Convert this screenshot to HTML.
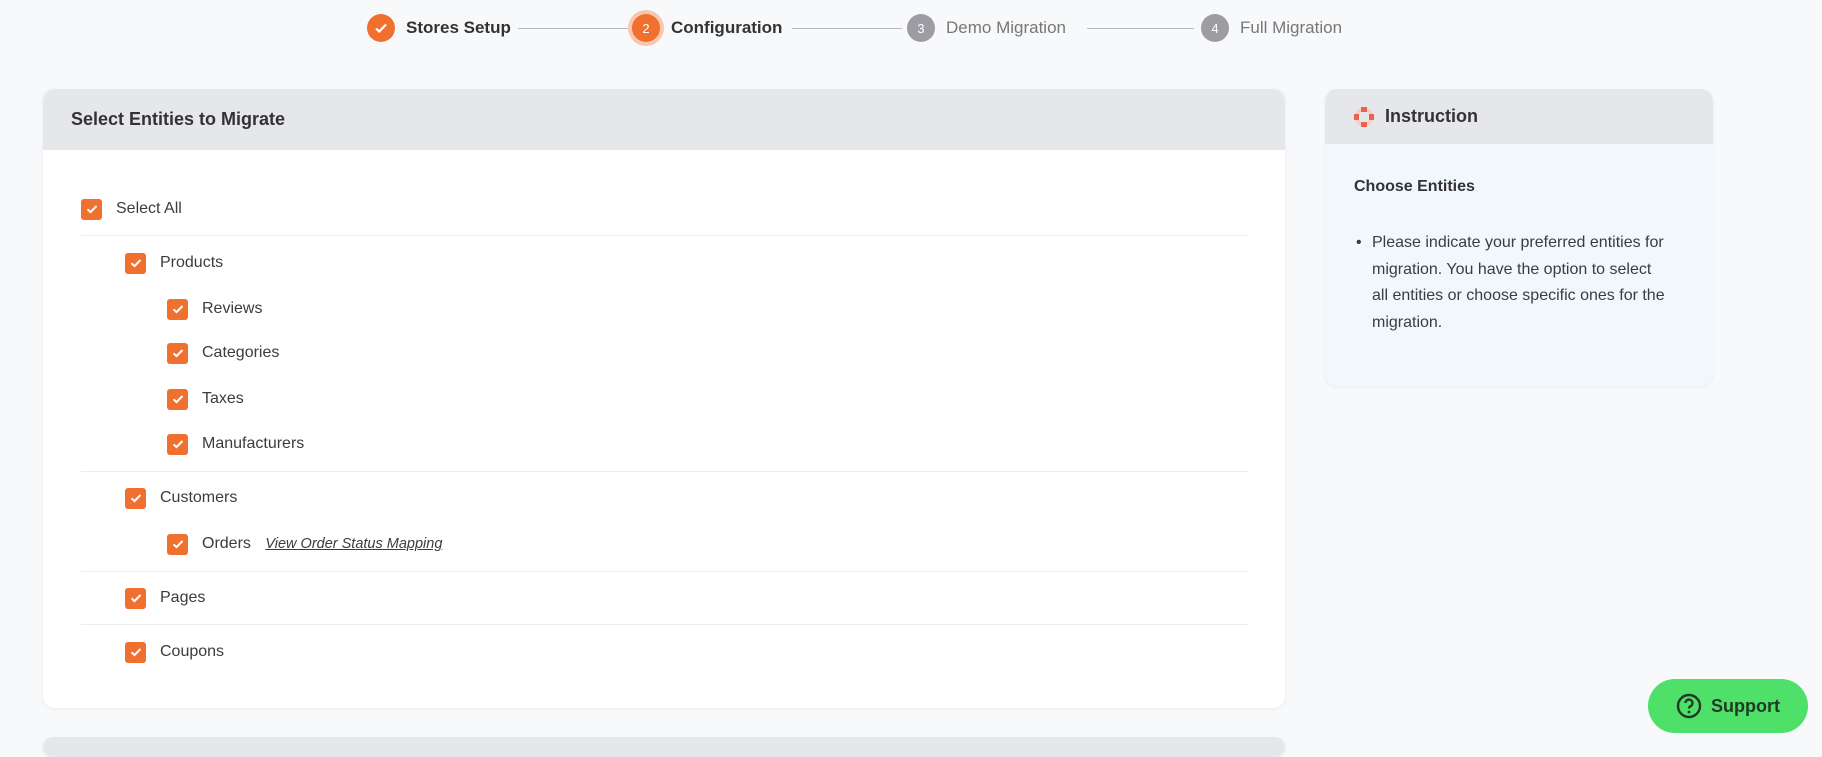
<!DOCTYPE html>
<html><head><meta charset="utf-8"><style>
*{box-sizing:border-box;margin:0;padding:0}
body{width:1822px;height:745px;overflow:hidden;background:#f8f9fb;font-family:"Liberation Sans",sans-serif;color:#3a3a3a;position:relative}
.step{position:absolute;top:14px;height:28px;display:flex;align-items:center;font-size:17px}
.c{width:28px;height:28px;border-radius:50%;display:flex;align-items:center;justify-content:center;color:#fff;font-size:13px;margin-right:11px}
.line{position:absolute;top:28px;height:1px;background:#b8b8be}
.card{position:absolute;background:#fff;border-radius:12px;box-shadow:0 1px 4px rgba(0,0,0,.06);overflow:hidden}
.hd{background:#e6e7ea;font-weight:bold;font-size:18px;color:#333;display:flex;align-items:center}
.row{position:absolute;display:flex;align-items:center;font-size:16px;color:#3c3c3c;height:22px}
.cb{width:21px;height:21px;background:#f07030;border-radius:3px;margin-right:14px;display:flex;align-items:center;justify-content:center}
.div{position:absolute;left:81px;width:1167px;height:1px;background:#ececec}
</style></head><body>
<div class="step" style="left:367px"><div class="c" style="background:#f07030"><svg width="16" height="16" viewBox="0 0 16 16"><path d="M3 8.5l3.2 3L13 4.5" stroke="#fff" stroke-width="2.2" fill="none"/></svg></div><b style="color:#333">Stores Setup</b></div>
<div class="line" style="left:518px;width:110px"></div>
<div class="step" style="left:632px"><div class="c" style="background:#f07030;box-shadow:0 0 0 4px #f9c7ad">2</div><b style="color:#333;font-weight:600">Configuration</b></div>
<div class="line" style="left:792px;width:110px"></div>
<div class="step" style="left:907px;color:#777"><div class="c" style="background:#9c9ca2">3</div>Demo Migration</div>
<div class="line" style="left:1087px;width:107px"></div>
<div class="step" style="left:1201px;color:#777"><div class="c" style="background:#9c9ca2">4</div>Full Migration</div>

<div class="card" style="left:43px;top:89px;width:1242px;height:619px">
<div class="hd" style="height:61px;padding-left:28px">Select Entities to Migrate</div>
</div>
<div class="div" style="top:235px"></div><div class="div" style="top:471px"></div><div class="div" style="top:571px"></div><div class="div" style="top:624px"></div>
<div id="rows"></div>

<div class="card" style="left:1325px;top:89px;width:388px;height:297px;background:#f0f7fd">
<div class="hd" style="height:55px;padding-left:28px"><svg width="22" height="22" viewBox="0 0 22 22" style="margin-right:10px"><circle cx="11" cy="11" r="7.5" fill="none" stroke="#f3d0c8" stroke-width="4"/><rect x="8" y="1" width="6" height="5" fill="#f06050"/><rect x="8" y="16" width="6" height="5" fill="#f06050"/><rect x="1" y="8" width="5" height="6" fill="#f06050"/><rect x="16" y="8" width="5" height="6" fill="#f06050"/></svg>Instruction</div>
<div style="position:absolute;left:29px;top:89px;font-size:16px;font-weight:bold;color:#333">Choose Entities</div>
<div style="position:absolute;left:31px;top:141px;font-size:16px;line-height:26.5px">•</div>
<div style="position:absolute;left:47px;top:141px;width:296px;font-size:16px;line-height:26.5px;color:#3c3c3c">Please indicate your preferred entities for migration. You have the option to select all entities or choose specific ones for the migration.</div>
</div>

<div class="card" style="left:43px;top:737px;width:1242px;height:20px;background:#e6e7ea"></div>

<div style="position:absolute;left:1648px;top:679px;width:160px;height:54px;border-radius:27px;background:#4fe06a;display:flex;align-items:center;justify-content:center;font-weight:bold;font-size:18px;color:#1f3a25">
<svg width="26" height="26" viewBox="0 0 26 26" style="margin-right:9px"><circle cx="13" cy="13" r="11" fill="none" stroke="#1f3a25" stroke-width="2.4"/><path d="M9.5 10a3.5 3.5 0 1 1 5 3.2c-1 .5-1.5 1.2-1.5 2.3" fill="none" stroke="#1f3a25" stroke-width="2.4"/><circle cx="13" cy="19" r="1.4" fill="#1f3a25"/></svg>Support</div>

<script>
var ck='<div class="cb"><svg width="14" height="14" viewBox="0 0 14 14"><path d="M2.5 7.3l3 2.8L11.5 4" stroke="#fff" stroke-width="2" fill="none"/></svg></div>';
var r=[[81,209,"Select All"],[125,263,"Products"],[167,309,"Reviews"],[167,353,"Categories"],[167,399,"Taxes"],[167,444,"Manufacturers"],[125,498,"Customers"],[167,544,'Orders <i style="font-size:14.5px;text-decoration:underline;margin-left:10px">View Order Status Mapping</i>'],[125,598,"Pages"],[125,652,"Coupons"]];
var h='';r.forEach(function(a){h+='<div class="row" style="left:'+a[0]+'px;top:'+(a[1]-11)+'px">'+ck+'<span>'+a[2]+'</span></div>'});
document.getElementById('rows').innerHTML=h;
</script>
</body></html>
